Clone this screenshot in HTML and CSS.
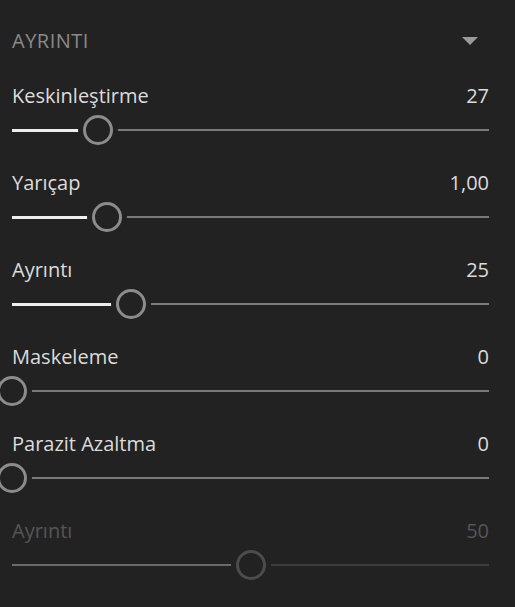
FILE: index.html
```html
<!DOCTYPE html>
<html lang="tr">
<head>
    <meta charset="UTF-8">
    <meta name="viewport" content="width=device-width, initial-scale=1.0">
    <title>Ayrıntı</title>
    <link rel="stylesheet" href="styles.css">
</head>
<body>
<section class="panel">
    <header class="panel-header">
        <span class="panel-title">AYRINTI</span>
        <span class="caret"></span>
    </header>

    <div class="slider-list">
        <div class="slider-row">
            <div class="slider-label"><span>Keskinleştirme</span><span>27</span></div>
            <div class="track" style="--pos: 18%">
                <div class="fill"></div><div class="rest"></div><div class="thumb"></div>
            </div>
        </div>
        <div class="slider-row">
            <div class="slider-label"><span>Yarıçap</span><span>1,00</span></div>
            <div class="track" style="--pos: 20%">
                <div class="fill"></div><div class="rest"></div><div class="thumb"></div>
            </div>
        </div>
        <div class="slider-row">
            <div class="slider-label"><span>Ayrıntı</span><span>25</span></div>
            <div class="track" style="--pos: 25%">
                <div class="fill"></div><div class="rest"></div><div class="thumb"></div>
            </div>
        </div>
        <div class="slider-row">
            <div class="slider-label"><span>Maskeleme</span><span>0</span></div>
            <div class="track" style="--pos: 0%">
                <div class="fill"></div><div class="rest"></div><div class="thumb"></div>
            </div>
        </div>
        <div class="slider-row">
            <div class="slider-label"><span>Parazit Azaltma</span><span>0</span></div>
            <div class="track" style="--pos: 0%">
                <div class="fill"></div><div class="rest"></div><div class="thumb"></div>
            </div>
        </div>
        <div class="slider-row disabled">
            <div class="slider-label"><span>Ayrıntı</span><span>50</span></div>
            <div class="track" style="--pos: 50%">
                <div class="fill"></div><div class="rest"></div><div class="thumb"></div>
            </div>
        </div>
    </div>
</section>
</body>
</html>
```

FILE: styles.css
```css
body {
    background-color: #222222;
    color: #dcdcdc;
    font-family: "Open Sans", "Noto Sans", sans-serif;
    margin: 0;
    padding: 0;
}

.panel {
    padding: 29px 26px 0 12px;
}

.panel-header {
    display: flex;
    justify-content: space-between;
    align-items: center;
    height: 24px;
    margin-bottom: 31px;
}

.panel-title {
    color: #8a8a8a;
    font-size: 20px;
    line-height: 24px;
    letter-spacing: 0.5px;
}

.caret {
    width: 0;
    height: 0;
    border-left: 8px solid transparent;
    border-right: 8px solid transparent;
    border-top: 8px solid #9a9a9a;
    margin-right: 11px;
}

.slider-list {
    display: flex;
    flex-direction: column;
    gap: 26px;
}

.slider-label {
    display: flex;
    justify-content: space-between;
    font-size: 20px;
    line-height: 24px;
}

.track {
    position: relative;
    display: flex;
    align-items: center;
    height: 30px;
    margin-top: 7px;
}

.fill {
    width: var(--pos);
    height: 3px;
    background-color: #eeeeee;
}

.rest {
    flex: 1;
    height: 2px;
    background-color: #7a7a7a;
}

.thumb {
    position: absolute;
    top: 0;
    left: var(--pos);
    width: 24px;
    height: 24px;
    margin-left: -15px;
    border: 3px solid #8c8c8c;
    border-radius: 50%;
    background-color: #222222;
    box-shadow: 0 0 0 5px #222222;
}

.disabled .slider-label {
    color: #555555;
}

.disabled .fill {
    height: 2px;
    background-color: #6a6a6a;
}

.disabled .rest {
    background-color: #3c3c3c;
}

.disabled .thumb {
    border-color: #4c4c4c;
}
```
